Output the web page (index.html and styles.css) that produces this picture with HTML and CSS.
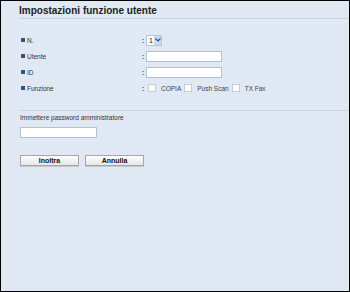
FILE: index.html
```html
<!DOCTYPE html>
<html lang="it">
<head>
    <meta charset="UTF-8">
    <title>Impostazioni funzione utente</title>
    <link rel="stylesheet" href="styles.css">
</head>
<body>
    <div class="frame">
        <h1 class="title">Impostazioni funzione utente</h1>

        <div class="fields">
            <div class="row">
                <span class="label"><i class="bullet"></i>N.</span>
                <span class="colon">:</span>
                <span class="select">
                    <span class="select-value">1</span>
                    <span class="select-arrow">
                        <svg width="6" height="4" viewBox="0 0 6 4"><path d="M0.5 0.5 L3 3 L5.5 0.5" fill="none" stroke="#2d4f8a" stroke-width="1.2"/></svg>
                    </span>
                </span>
            </div>
            <div class="row">
                <span class="label"><i class="bullet"></i>Utente</span>
                <span class="colon">:</span>
                <input type="text" class="text-input">
            </div>
            <div class="row">
                <span class="label"><i class="bullet"></i>ID</span>
                <span class="colon">:</span>
                <input type="text" class="text-input">
            </div>
            <div class="row">
                <span class="label"><i class="bullet"></i>Funzione</span>
                <span class="colon">:</span>
                <span class="checks">
                    <span class="check"><i class="box"></i>COPIA</span>
                    <span class="check"><i class="box"></i>Push Scan</span>
                    <span class="check"><i class="box"></i>TX Fax</span>
                </span>
            </div>
        </div>

        <div class="admin">
            <div class="admin-label">Immettere password amministratore</div>
            <input type="password" class="text-input short">
        </div>

        <div class="actions">
            <button type="button" class="btn">Inoltra</button>
            <button type="button" class="btn">Annulla</button>
        </div>
    </div>
</body>
</html>
```

FILE: styles.css
```css
* {
    margin: 0;
    padding: 0;
    box-sizing: border-box;
}

body {
    font-family: "Liberation Sans", Arial, sans-serif;
    color: #333;
}

.frame {
    width: 350px;
    height: 292px;
    border: 1px solid #000;
    background: #dfe8f3;
}

.title {
    margin-left: 18px;
    padding-top: 4px;
    padding-bottom: 1px;
    font-size: 10px;
    line-height: 12px;
    font-weight: bold;
    color: #222;
    border-bottom: 1px solid #c6d4e5;
}

.fields {
    margin-top: 13px;
    padding-left: 19px;
}

.row {
    display: flex;
    align-items: center;
    height: 16px;
    font-size: 6.5px;
}

.label {
    display: flex;
    align-items: center;
    width: 122px;
    padding-left: 1px;
}

.bullet {
    width: 4px;
    height: 4px;
    margin-right: 2px;
    background: #3e4f72;
}

.colon {
    width: 4px;
    font-weight: bold;
    color: #444;
}

.select {
    display: flex;
    width: 16px;
    height: 11px;
    background: #fff;
    border: 1px solid #b7c6d8;
}

.select-value {
    width: 7px;
    padding-left: 2px;
    line-height: 9px;
    font-size: 7px;
    color: #111;
}

.select-arrow {
    display: flex;
    align-items: center;
    justify-content: center;
    flex: 1;
    background: #c9d9ef;
}

.text-input {
    width: 76px;
    height: 11px;
    background: #fff;
    border: 1px solid #b3c2d4;
    outline: none;
}

.checks {
    display: flex;
    align-items: center;
    padding-left: 2px;
}

.check {
    display: flex;
    align-items: center;
    margin-right: 3px;
    color: #444;
}

.box {
    width: 8px;
    height: 8px;
    margin-right: 5px;
    background: #fff;
    border: 1px solid #c4ccd6;
}

.admin {
    margin-top: 14px;
    margin-left: 18px;
    padding-top: 2px;
    border-top: 1px solid #c6d4e5;
}

.admin-label {
    padding-left: 1px;
    font-size: 6.5px;
    line-height: 10px;
    color: #333;
}

.short {
    width: 77px;
    margin-left: 1px;
    margin-top: 2px;
}

.actions {
    display: flex;
    gap: 6px;
    margin-top: 14px;
    padding-left: 19px;
}

.btn {
    width: 59px;
    height: 11px;
    font-family: "Liberation Sans", Arial, sans-serif;
    font-size: 7px;
    font-weight: bold;
    line-height: 9px;
    color: #111;
    background: linear-gradient(#ffffff, #e6e6e6);
    border: 1px solid #a6a6a6;
    box-shadow: 0 1px 0 #c0c8d2;
}
```
